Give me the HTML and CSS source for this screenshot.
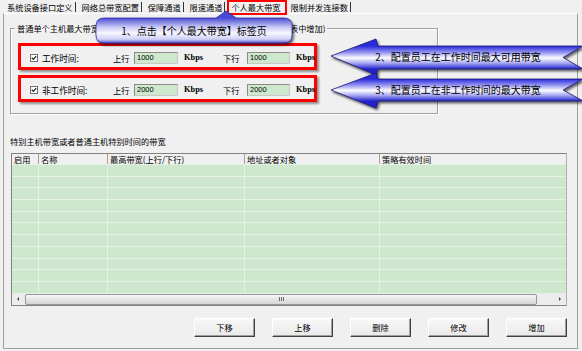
FILE: index.html
```html
<!DOCTYPE html>
<html lang="zh-CN">
<head>
    <meta charset="UTF-8">
    <meta name="viewport" content="width=device-width, initial-scale=1.0">
    <title>个人最大带宽</title>
    <link rel="stylesheet" href="styles.css">
</head>
<body>
<div class="window">
    <div class="tabs">
        <span class="tab first">系统设备接口定义</span>
        <span class="tab">网络总带宽配置</span>
        <span class="tab">保障通道</span>
        <span class="tab">限速通道</span>
        <span class="tab active">个人最大带宽</span>
        <span class="tab">限制并发连接数</span>
    </div>

    <div class="panel">
        <fieldset class="group">
            <legend>普通单个主机最大带宽(所有主机默认使用此带宽，特别主机带宽请在下面列表中增加)</legend>
            <div class="limit-row">
                <span class="check"><svg width="8" height="8" viewBox="0 0 8 8"><rect x="0.5" y="0.5" width="7" height="7" fill="#fff" stroke="#6f6f6f"/><path d="M1.8 3.8 L3.3 5.4 L6.2 2.2" fill="none" stroke="#1d3b1d" stroke-width="1.3"/></svg></span>
                <span class="row-label">工作时间:</span>
                <span class="dir">上行</span>
                <span class="num">1000</span>
                <span class="unit">Kbps</span>
                <span class="dir">下行</span>
                <span class="num">1000</span>
                <span class="unit">Kbps</span>
            </div>
            <div class="limit-row">
                <span class="check"><svg width="8" height="8" viewBox="0 0 8 8"><rect x="0.5" y="0.5" width="7" height="7" fill="#fff" stroke="#6f6f6f"/><path d="M1.8 3.8 L3.3 5.4 L6.2 2.2" fill="none" stroke="#1d3b1d" stroke-width="1.3"/></svg></span>
                <span class="row-label">非工作时间:</span>
                <span class="dir">上行</span>
                <span class="num">2000</span>
                <span class="unit">Kbps</span>
                <span class="dir">下行</span>
                <span class="num">2000</span>
                <span class="unit">Kbps</span>
            </div>
        </fieldset>

        <div class="table-title">特别主机带宽或者普通主机特别时间的带宽</div>
        <div class="grid">
            <div class="grid-head">
                <span class="c1">启用</span>
                <span class="c2">名称</span>
                <span class="c3">最高带宽(上行/下行)</span>
                <span class="c4">地址或者对象</span>
                <span class="c5">策略有效时间</span>
            </div>
            <div class="grid-body">
                <span class="c1"></span>
                <span class="c2"></span>
                <span class="c3"></span>
                <span class="c4"></span>
                <span class="c5"></span>
            </div>
            <div class="hscroll">
                <span class="sb-btn"><i class="tri-left"></i></span>
                <span class="thumb"><i class="grip"></i></span>
                <span class="sb-track"></span>
                <span class="sb-btn"><i class="tri-right"></i></span>
            </div>
        </div>

        <div class="buttons">
            <button type="button" class="btn">下移</button>
            <button type="button" class="btn">上移</button>
            <button type="button" class="btn">删除</button>
            <button type="button" class="btn">修改</button>
            <button type="button" class="btn">增加</button>
        </div>
    </div>

    <!-- annotation callouts drawn over the dialog -->
    <svg class="notes" width="582" height="351" viewBox="0 0 582 351">
        <defs>
            <filter id="shade" x="-10%" y="-30%" width="120%" height="170%">
                <feDropShadow dx="1.5" dy="2" stdDeviation="1" flood-color="#000" flood-opacity="0.6"/>
            </filter>
            <linearGradient id="bubble" gradientUnits="userSpaceOnUse" x1="0" y1="18" x2="0" y2="43">
                <stop offset="0" stop-color="#4a4ad2"/>
                <stop offset="0.35" stop-color="#c4c4f4"/>
                <stop offset="0.6" stop-color="#f7f7ff"/>
                <stop offset="0.85" stop-color="#cfcff5"/>
                <stop offset="1" stop-color="#5656d2"/>
            </linearGradient>
            <linearGradient id="ribbon2" gradientUnits="userSpaceOnUse" x1="0" y1="46" x2="0" y2="69">
                <stop offset="0" stop-color="#2a2adc"/>
                <stop offset="0.3" stop-color="#9c9cf2"/>
                <stop offset="0.52" stop-color="#fcfcff"/>
                <stop offset="0.75" stop-color="#a4a4f2"/>
                <stop offset="1" stop-color="#2424cc"/>
            </linearGradient>
            <linearGradient id="ribbon3" gradientUnits="userSpaceOnUse" x1="0" y1="79" x2="0" y2="101">
                <stop offset="0" stop-color="#2a2adc"/>
                <stop offset="0.3" stop-color="#9c9cf2"/>
                <stop offset="0.52" stop-color="#fcfcff"/>
                <stop offset="0.75" stop-color="#a4a4f2"/>
                <stop offset="1" stop-color="#2424cc"/>
            </linearGradient>
        </defs>

        <path filter="url(#shade)" fill="url(#bubble)" stroke="#2e2ea6" stroke-width="0.8"
              d="M104 18 H216 L226 11 L236 18 H284 Q292 18 292 26 V35 Q292 43 284 43 H104 Q96 43 96 35 V26 Q96 18 104 18 Z"/>
        <text x="194" y="35" class="note-text" text-anchor="middle">1、点击【个人最大带宽】标签页</text>

        <path filter="url(#shade)" fill="url(#ribbon2)" stroke="#16166a" stroke-width="0.8"
              d="M331 56 L376 39 L378 46 H583 L563 57.5 L583 69 H378 L376 75 Z"/>
        <text x="458" y="61" class="note-text" text-anchor="middle">2、配置员工在工作时间最大可用带宽</text>

        <path filter="url(#shade)" fill="url(#ribbon3)" stroke="#16166a" stroke-width="0.8"
              d="M331 90 L376 73 L378 79 H583 L563 90 L583 101 H378 L376 108 Z"/>
        <text x="458" y="94" class="note-text" text-anchor="middle">3、配置员工在非工作时间的最大带宽</text>
    </svg>
</div>
</body>
</html>
```

FILE: styles.css
```css
* {
    box-sizing: border-box;
}
body {
    margin: 0;
    background: #f0f0f0;
    font-family: "Noto Sans CJK SC", "Noto Sans", sans-serif;
    font-size: 8.2px;
    color: #000;
}
.window {
    position: relative;
    width: 582px;
    height: 351px;
    overflow: hidden;
}

/* tab strip */
.tabs {
    display: flex;
    align-items: flex-start;
    height: 13px;
    padding-left: 7px;
}
.tab {
    margin-top: 2px;
    height: 10px;
    line-height: 10px;
    padding: 0 2px 0 6px;
    border-right: 1px solid #333;
    white-space: nowrap;
}
.tab.first {
    padding-left: 0;
}
.tab.active {
    margin-top: 0;
    margin-left: 2px;
    height: 15px;
    padding: 0 4px 0 2px;
    border: 2px solid #ff0000;
    line-height: 10px;
}
.tab.active + .tab {
    padding-left: 4px;
}

/* main page */
.panel {
    margin-left: 3px;
    width: 575px;
    height: 336px;
    border: 1px solid #a0a0a0;
    border-top-color: #fff;
}
.group {
    margin: 8px 0 0 6px;
    width: 428px;
    min-width: 0;
    padding: 9px 0 11px 7px;
    border: 1px solid #a0a0a0;
    box-shadow: inset 1px 1px 0 #fff, 1px 1px 0 #fff;
}
.group legend {
    margin-left: -3px;
    padding: 0 2px;
    line-height: 12px;
    white-space: nowrap;
}
.limit-row {
    display: grid;
    grid-template-columns: 12px 71px 21px 44px 45px 24px 43px 1fr;
    align-items: center;
    width: 299px;
    height: 27px;
    padding: 2px 0 0 9px;
    border: 3px solid #ff0000;
    box-shadow: 2px 2px 2px rgba(0, 0, 0, 0.4);
}
.limit-row + .limit-row {
    margin-top: 5px;
}
.check {
    display: block;
    width: 8px;
    height: 8px;
}
.check svg {
    display: block;
}
.row-label {
    font-size: 8.6px;
}
.dir {
    font-size: 8.2px;
}
.num {
    height: 12px;
    padding-left: 2px;
    border: 1px solid #8a8a8a;
    border-right-color: #c8c8c8;
    border-bottom-color: #c8c8c8;
    background: #cde8cd;
    font-family: "Liberation Sans", sans-serif;
    font-size: 7.5px;
    line-height: 10px;
}
.unit {
    padding-left: 6px;
    font-family: "Liberation Serif", serif;
    font-weight: bold;
    font-size: 8.4px;
}

/* list of special hosts */
.table-title {
    margin: 22px 0 0 6px;
    line-height: 11px;
}
.grid {
    margin: 6px 0 0 7px;
    width: 556px;
    height: 153px;
    border: 1px solid #828282;
    border-right-color: #b0b0b0;
}
.grid-head,
.grid-body {
    display: flex;
}
.grid-head {
    height: 10px;
    line-height: 10px;
    background: #f0f0f0;
}
.grid-head span {
    padding-left: 2px;
    border-right: 1px solid #a0a0a0;
    white-space: nowrap;
}
.grid-body {
    height: 129px;
    background: repeating-linear-gradient(to bottom, #cde8cd 0, #cde8cd 10.7px, #e6f2e6 10.7px, #e6f2e6 11.7px);
    background-position: 0 1px;
}
.grid-body span {
    border-right: 1px solid #e6f2e6;
}
.c1 { width: 27px; }
.c2 { width: 69px; }
.c3 { width: 137px; }
.c4 { width: 135px; }
.c5 { flex: 1; }
.grid-head .c5,
.grid-body .c5 {
    border-right: none;
}
.hscroll {
    display: flex;
    align-items: center;
    height: 12px;
    background: #ececec;
}
.sb-btn {
    display: flex;
    align-items: center;
    justify-content: center;
    width: 12px;
    height: 12px;
}
.tri-left,
.tri-right {
    width: 0;
    height: 0;
    border-top: 2px solid transparent;
    border-bottom: 2px solid transparent;
}
.tri-left {
    border-right: 2px solid #444;
}
.tri-right {
    border-left: 2px solid #444;
}
.thumb {
    display: flex;
    align-items: center;
    justify-content: center;
    margin-left: 1px;
    width: 512px;
    height: 11px;
    border: 1px solid #979797;
    border-radius: 2px;
    background: linear-gradient(#f7f7f7, #e4e4e4 50%, #d6d6d6);
}
.grip {
    width: 5px;
    height: 4px;
    background: repeating-linear-gradient(to right, #6a6a6a 0, #6a6a6a 1px, transparent 1px, transparent 2px);
}
.sb-track {
    flex: 1;
}

/* command buttons */
.buttons {
    display: flex;
    justify-content: flex-end;
    gap: 17px;
    margin-top: 12px;
    padding-right: 10px;
}
.btn {
    width: 61px;
    height: 19px;
    padding: 0;
    border: 1px solid;
    border-color: #fff #404040 #404040 #fff;
    box-shadow: inset -1px -1px 0 #a0a0a0;
    background: linear-gradient(#f8f8f8, #e9e9e9);
    font-family: inherit;
    font-size: 8.2px;
    line-height: 17px;
    color: #000;
}

/* annotations */
.notes {
    position: absolute;
    left: 0;
    top: 0;
    pointer-events: none;
}
.note-text {
    font-family: "Noto Sans CJK SC", sans-serif;
    font-size: 10px;
    fill: #000;
}
```
